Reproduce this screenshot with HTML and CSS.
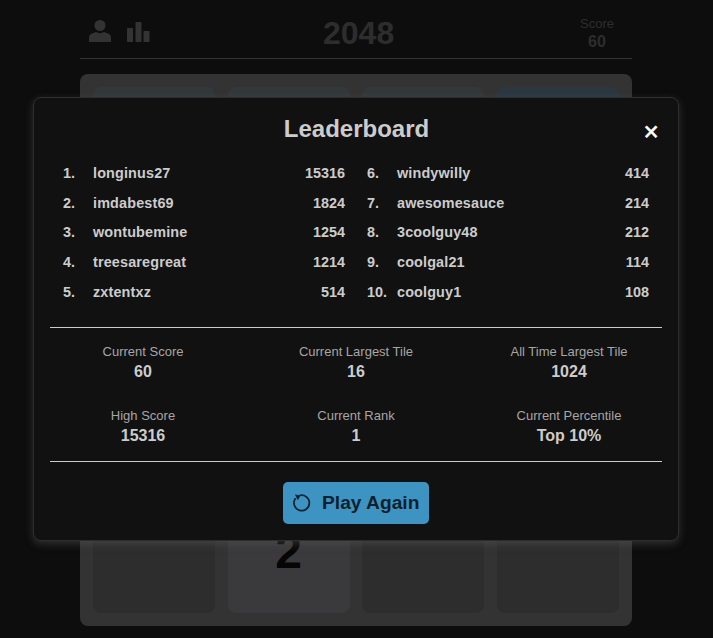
FILE: index.html
```html
<!DOCTYPE html>
<html lang="en">
<head>
<meta charset="utf-8">
<title>2048</title>
<link rel="stylesheet" href="styles.css">
</head>
<body>
<main class="game">
  <header class="topbar">
    <div class="topbar-icons">
      <svg class="icon" viewBox="0 0 24 24" width="24" height="24"><circle cx="12" cy="6.500" r="5.500"/><path d="M1 23v-4.500c0-2 1-3.300 3-4l4-1.500c2.500 1.500 5.500 1.500 8 0l4 1.500c2 .7 3 2 3 4V23z"/></svg>
      <svg class="icon" viewBox="0 0 24 24" width="24" height="24"><rect x="1" y="9" width="6" height="14" rx=".5"/><rect x="9.500" y="3" width="6" height="20" rx=".5"/><rect x="17.500" y="12" width="6" height="11" rx=".5"/></svg>
    </div>
    <h1 class="game-title">2048</h1>
    <div class="score"><span class="score-label">Score</span><strong class="score-value">60</strong></div>
  </header>
  <section class="board">
    <div class="tile tile-t"></div><div class="tile tile-t"></div><div class="tile tile-t"></div><div class="tile tile-b"></div>
    <div class="tile"></div><div class="tile"></div><div class="tile"></div><div class="tile"></div>
    <div class="tile"></div><div class="tile"></div><div class="tile"></div><div class="tile"></div>
    <div class="tile"></div><div class="tile tile-2">2</div><div class="tile"></div><div class="tile"></div>
  </section>
</main>
<div class="modal">
  <div class="modal-head">
    <h2 class="modal-title">Leaderboard</h2>
    <span class="modal-close">✕</span>
  </div>
  <ol class="ranks">
    <li class="rank"><span class="rank-n">1.</span><span class="rank-name">longinus27</span><span class="rank-score">15316</span></li>
    <li class="rank"><span class="rank-n">6.</span><span class="rank-name">windywilly</span><span class="rank-score">414</span></li>
    <li class="rank"><span class="rank-n">2.</span><span class="rank-name">imdabest69</span><span class="rank-score">1824</span></li>
    <li class="rank"><span class="rank-n">7.</span><span class="rank-name">awesomesauce</span><span class="rank-score">214</span></li>
    <li class="rank"><span class="rank-n">3.</span><span class="rank-name">wontubemine</span><span class="rank-score">1254</span></li>
    <li class="rank"><span class="rank-n">8.</span><span class="rank-name">3coolguy48</span><span class="rank-score">212</span></li>
    <li class="rank"><span class="rank-n">4.</span><span class="rank-name">treesaregreat</span><span class="rank-score">1214</span></li>
    <li class="rank"><span class="rank-n">9.</span><span class="rank-name">coolgal21</span><span class="rank-score">114</span></li>
    <li class="rank"><span class="rank-n">5.</span><span class="rank-name">zxtentxz</span><span class="rank-score">514</span></li>
    <li class="rank"><span class="rank-n">10.</span><span class="rank-name">coolguy1</span><span class="rank-score">108</span></li>
  </ol>
  <div class="stats">
    <div class="stat"><span class="stat-label">Current Score</span><strong class="stat-value">60</strong></div>
    <div class="stat"><span class="stat-label">Current Largest Tile</span><strong class="stat-value">16</strong></div>
    <div class="stat"><span class="stat-label">All Time Largest Tile</span><strong class="stat-value">1024</strong></div>
    <div class="stat"><span class="stat-label">High Score</span><strong class="stat-value">15316</strong></div>
    <div class="stat"><span class="stat-label">Current Rank</span><strong class="stat-value">1</strong></div>
    <div class="stat"><span class="stat-label">Current Percentile</span><strong class="stat-value">Top 10%</strong></div>
  </div>
  <div class="modal-foot">
    <button class="play" type="button">
      <svg class="icon-replay" viewBox="0 0 20 20" width="20" height="20"><path d="M7.500 2.560a7.700 7.700 0 1 1-4 2.800"/><path class="arrow" d="M3 1.500l5.500 1-2.700 4.700z"/></svg>
      <span>Play Again</span>
    </button>
  </div>
</div>
</body>
</html>
```
FILE: styles.css
```css
* { box-sizing: border-box; }
html, body { margin: 0; padding: 0; }
body {
  position: relative;
  width: 713px;
  height: 638px;
  overflow: hidden;
  background: #0d0d0d;
  font-family: "Liberation Sans", sans-serif;
}
.game { width: 552px; margin-left: 80px; }
.topbar {
  height: 59px;
  display: flex;
  align-items: flex-start;
  justify-content: space-between;
  padding: 16px 18px 0 8px;
  border-bottom: 1px solid #333;
  position: relative;
}
.topbar-icons { display: flex; gap: 14px; padding-top: 3px; }
.icon { fill: #333; display: block; }
.game-title {
  margin: 0;
  position: absolute;
  left: 243px;
  top: 13px;
  font-size: 32px;
  line-height: 40px;
  font-weight: 700;
  color: #2d2d2d;
}
.score { display: flex; flex-direction: column; align-items: center; }
.score-label { font-size: 13px; line-height: 16px; color: #2d2d2d; }
.score-value { font-size: 16px; line-height: 20px; color: #2d2d2d; }
.board {
  margin-top: 15px;
  width: 552px;
  height: 552px;
  padding: 13px;
  background: #333;
  border-radius: 8px;
  display: grid;
  grid-template-columns: repeat(4, 1fr);
  grid-template-rows: repeat(4, 1fr);
  gap: 12.670px;
}
.tile {
  background: #2d2d2d;
  border-radius: 8px;
  display: flex;
  align-items: center;
  justify-content: center;
}
.tile-t { background: #33383b; }
.tile-b { background: #2b3741; }
.tile-2 {
  background: #3a3a3c;
  color: #060606;
  font-weight: 700;
  font-size: 48px;
}
.modal {
  position: absolute;
  left: 33px;
  top: 97px;
  width: 646px;
  height: 444px;
  padding: 0 16px;
  background: #111;
  border: 1px solid #2e2e2e;
  border-radius: 8px;
  box-shadow: 0 3px 8px rgba(90, 90, 90, .45);
  color: #ccc;
}
.modal-head {
  height: 60px;
  position: relative;
  display: flex;
  align-items: flex-start;
  justify-content: center;
  padding: 15px 0 0 1px;
}
.modal-title {
  margin: 0;
  font-size: 24px;
  line-height: 32px;
  font-weight: 700;
  color: #ccc;
}
.modal-close {
  position: absolute;
  right: 2.500px;
  top: 22px;
  font-size: 20px;
  line-height: 24px;
  font-weight: 700;
  color: #fff;
  -webkit-text-stroke: .5px #fff;
  font-family: "DejaVu Sans", sans-serif;
}
.ranks {
  list-style: none;
  margin: 0;
  padding: 0 13px;
  height: 170px;
  display: grid;
  grid-template-columns: 282px 282px;
  column-gap: 22px;
  grid-auto-rows: 29.750px;
  align-content: start;
  border-bottom: 1px solid #ccc;
}
.rank {
  display: flex;
  align-items: center;
  font-size: 14.400px;
  font-weight: 700;
}
.rank-n { width: 30px; }
.rank-name { flex: 1; letter-spacing: .15px; }
.stats {
  height: 134px;
  padding: 14px 13px 0;
  display: grid;
  grid-template-columns: repeat(3, 1fr);
  column-gap: 53px;
  grid-auto-rows: 64px;
  border-bottom: 1px solid #ccc;
}
.stat { display: flex; flex-direction: column; align-items: center; }
.stat-label { font-size: 13px; line-height: 20px; color: #a6a6a6; }
.stat-value { font-size: 16px; line-height: 20px; color: #ccc; }
.modal-foot { display: flex; justify-content: center; padding-top: 20px; }
.play {
  height: 42px;
  width: 146px;
  display: flex;
  align-items: center;
  gap: 10px;
  border: 0;
  border-radius: 5px;
  background: #3d93c1;
  color: #0f1f2b;
  font-family: "Liberation Sans", sans-serif;
  font-size: 19.200px;
  font-weight: 700;
  padding: 0 0 0 9px;
}
.icon-replay { fill: none; stroke: #0f1f2b; stroke-width: 1.700; flex: none; }
.icon-replay .arrow { fill: #0f1f2b; stroke: none; }
```
